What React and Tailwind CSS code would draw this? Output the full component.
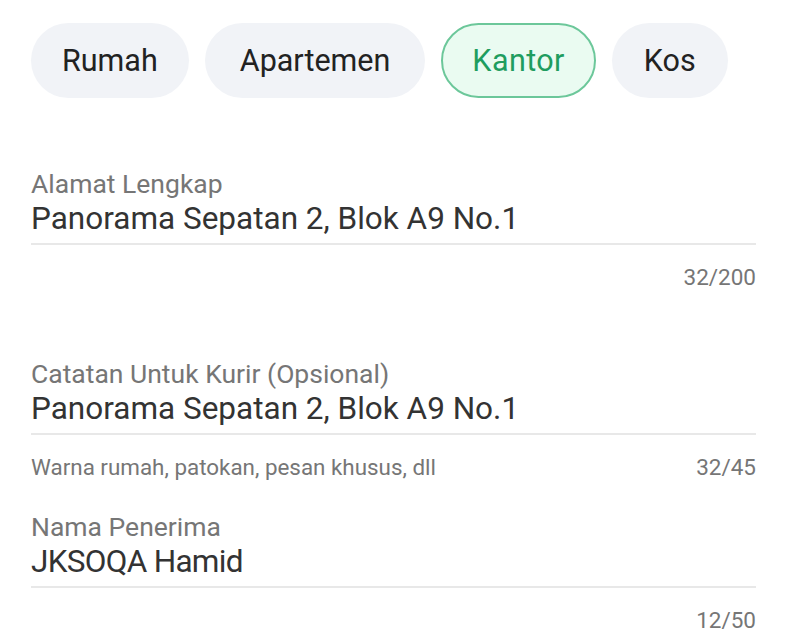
export default function App() {
  const chips = [
    { t: "Rumah", a: false, p: "px-[31px]" },
    { t: "Apartemen", a: false, p: "px-[35px]" },
    { t: "Kantor", a: true, p: "px-[29px]" },
    { t: "Kos", a: false, p: "px-[32px]" },
  ];
  return (
    <div className="w-[787px] h-[640px] bg-white overflow-hidden" style={{ fontFamily: "Roboto, 'Noto Sans', sans-serif" }}>
      <div className="flex gap-4 pl-[31px] pt-[23px]">
        {chips.map((c) =>
          c.a ? (
            <div key={c.t} className={`h-[75px] ${c.p} rounded-full flex items-center text-[30.5px] tracking-[0.4px] border-2 border-[#6cc79a] bg-[#eafbf1] text-[#1f9d5f]`}>
              {c.t}
            </div>
          ) : (
            <div key={c.t} className={`h-[75px] ${c.p} rounded-full flex items-center text-[30.5px] bg-[#f1f3f7] text-[#222]`}>
              {c.t}
            </div>
          )
        )}
      </div>

      <div className="pl-[31px] pr-[31px]">
        <div className="mt-[70px]">
          <div className="text-[26.5px] leading-[32px] text-[#767676]">Alamat Lengkap</div>
          <div className="text-[31.5px] leading-[38px] text-[#333]">Panorama Sepatan 2, Blok A9 No.1</div>
          <div className="h-[2px] bg-[#e8e8e8] mt-[5px]"></div>
          <div className="flex justify-end text-[22.5px] leading-[28px] text-[#767676] mt-[18px]">32/200</div>
        </div>

        <div className="mt-[67px]">
          <div className="text-[26.5px] leading-[32px] text-[#767676]">Catatan Untuk Kurir (Opsional)</div>
          <div className="text-[31.5px] leading-[38px] text-[#333]">Panorama Sepatan 2, Blok A9 No.1</div>
          <div className="h-[2px] bg-[#e8e8e8] mt-[5px]"></div>
          <div className="flex justify-between items-baseline text-[22.5px] leading-[28px] text-[#767676] mt-[18px]">
            <span className="text-[22.4px]">Warna rumah, patokan, pesan khusus, dll</span>
            <span>32/45</span>
          </div>
        </div>

        <div className="mt-[30px]">
          <div className="text-[26.5px] leading-[32px] text-[#767676]">Nama Penerima</div>
          <div className="text-[31.5px] leading-[38px] text-[#333] tracking-[-0.7px]">JKSOQA Hamid</div>
          <div className="h-[2px] bg-[#e8e8e8] mt-[5px]"></div>
          <div className="flex justify-end text-[22.5px] leading-[28px] text-[#767676] mt-[18px]">12/50</div>
        </div>
      </div>
    </div>
  );
}
